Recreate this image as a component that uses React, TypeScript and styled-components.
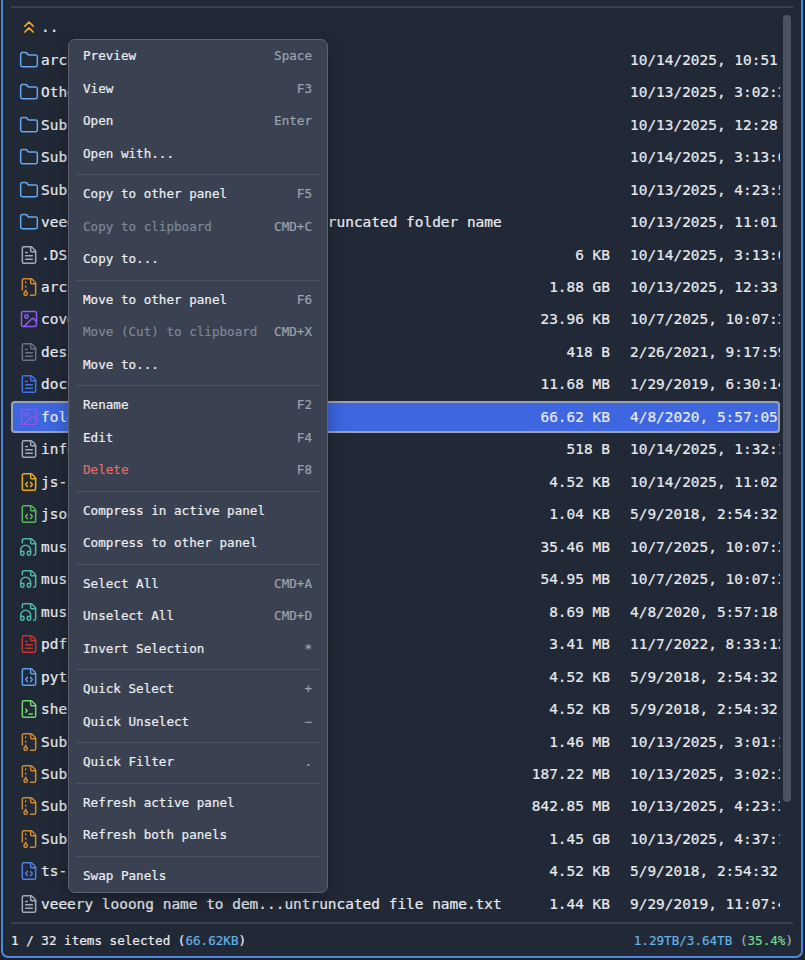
import React from 'react'
import styled, { createGlobalStyle } from 'styled-components'
import {
  ChevronsUp,
  FileArchive,
  FileCode,
  FileHeadphone,
  FileTerminal,
  FileText,
  Folder,
  Image,
  LucideIcon,
} from 'lucide-react'

const GlobalStyle = createGlobalStyle`
  html, body {
    margin: 0;
    height: 960px;
    overflow: hidden;
    background: #1c222e;
  }
  * {
    box-sizing: border-box;
  }
`
const Panel = styled.div`
  position: relative;
  height: 958px;
  margin: 0 2px 2px 1px;
  padding: 6px 8px 0;
  display: flex;
  flex-direction: column;
  background: #222936;
  border: 2px solid #4f85dc;
  border-top: none;
  border-radius: 0 0 7px 7px;
  font-family: "DejaVu Sans Mono", "Liberation Mono", monospace;
  color: #e8ebf0;
  -webkit-text-stroke: 0.2px;
`
const TopLine = styled.div`
  height: 2px;
  background: #394150;
`
const ListArea = styled.div`
  flex: 1;
  display: flex;
  padding-top: 3px;
  min-height: 0;
`
const Rows = styled.div`
  width: 769px;
`
const Row = styled.div<{ $selected?: boolean }>`
  height: 32.48px;
  display: flex;
  align-items: center;
  padding: 0 0 0 8px;
  font-size: 14.45px;
  white-space: nowrap;
  border-radius: 4px;
  background: ${p => (p.$selected ? '#3d66e0' : 'transparent')};
  box-shadow: ${p => (p.$selected ? 'inset 0 0 0 2px #98a3b5' : 'none')};
`
const IconSlot = styled.span<{ $tone: string }>`
  width: 20px;
  height: 20px;
  margin-right: 2px;
  flex: none;
  display: flex;
  color: ${p => p.$tone};
`
const Name = styled.span`
  flex: 1;
  overflow: hidden;
`
const Size = styled.span`
  width: 100px;
  text-align: right;
`
const Modified = styled.span`
  width: 150px;
  margin-left: 20px;
  overflow: hidden;
`
const ScrollThumb = styled.div`
  width: 8px;
  height: 787px;
  margin: 4px 0 0 3px;
  border-radius: 4px;
  background: #4b5361;
`
const StatusBar = styled.div`
  height: 34px;
  display: flex;
  align-items: center;
  justify-content: space-between;
  border-top: 2px solid #394150;
  font-size: 12.6px;
  white-space: nowrap;
`
const Blue = styled.span`
  color: #63b3ed;
`
const Green = styled.span`
  color: #74d98f;
`
const Muted = styled.span`
  color: #a0aec0;
`
const Menu = styled.div`
  position: absolute;
  left: 65px;
  top: 39px;
  width: 260px;
  height: 854px;
  background: #3a4150;
  border: 1px solid #5b6371;
  border-radius: 7px;
  font-size: 12.6px;
  box-shadow: 0 6px 18px rgba(0, 0, 0, 0.3);
`
const MenuItem = styled.div<{ $tone?: 'disabled' | 'danger' }>`
  height: 32.5px;
  padding: 0 15px 1px 14px;
  display: flex;
  align-items: center;
  justify-content: space-between;
  white-space: nowrap;
  color: ${p =>
    p.$tone === 'disabled' ? '#7f8796' : p.$tone === 'danger' ? '#e06c6c' : '#eceef2'};
`
const Shortcut = styled.span`
  color: #9ca3af;
`
const MenuSeparator = styled.div`
  height: 1px;
  margin: 4px 7px 3px;
  background: #4b5362;
`

const FOLDER = '#63a9ee'
const TEXT = '#a4abb6'
const ARCHIVE = '#d08a2c'
const IMAGE = '#8f5cf6'
const MUSIC = '#4fb8a3'
const TS = '#4c80e6'

type Entry = {
  icon: LucideIcon
  tone: string
  name: string
  size?: string
  date: string
  selected?: boolean
}

const entries: Entry[] = [
  { icon: Folder, tone: FOLDER, name: 'archives', date: '10/14/2025, 10:51:22 AM' },
  { icon: Folder, tone: FOLDER, name: 'Other', date: '10/13/2025, 3:02:31 PM' },
  { icon: Folder, tone: FOLDER, name: 'Subfolder 1', date: '10/13/2025, 12:28:44 PM' },
  { icon: Folder, tone: FOLDER, name: 'Subfolder 2', date: '10/14/2025, 3:13:08 PM' },
  { icon: Folder, tone: FOLDER, name: 'Subfolder 3', date: '10/13/2025, 4:23:51 PM' },
  { icon: Folder, tone: FOLDER, name: 'veeery looong name to demon...untruncated folder name', date: '10/13/2025, 11:01:12 AM' },
  { icon: FileText, tone: TEXT, name: '.DS_Store', size: '6 KB', date: '10/14/2025, 3:13:08 PM' },
  { icon: FileArchive, tone: ARCHIVE, name: 'archive.zip', size: '1.88 GB', date: '10/13/2025, 12:33:40 PM' },
  { icon: Image, tone: IMAGE, name: 'cover.png', size: '23.96 KB', date: '10/7/2025, 10:07:31 AM' },
  { icon: FileText, tone: '#6b7280', name: 'desktop.ini', size: '418 B', date: '2/26/2021, 9:17:59 AM' },
  { icon: FileText, tone: '#3f73e6', name: 'document.docx', size: '11.68 MB', date: '1/29/2019, 6:30:14 PM' },
  { icon: Image, tone: '#9355e0', name: 'folder.jpg', size: '66.62 KB', date: '4/8/2020, 5:57:05 PM', selected: true },
  { icon: FileText, tone: TEXT, name: 'info.txt', size: '518 B', date: '10/14/2025, 1:32:11 PM' },
  { icon: FileCode, tone: '#eaaa1e', name: 'js-file.js', size: '4.52 KB', date: '10/14/2025, 11:02:18 AM' },
  { icon: FileCode, tone: '#5fb760', name: 'json-file.json', size: '1.04 KB', date: '5/9/2018, 2:54:32 PM' },
  { icon: FileHeadphone, tone: MUSIC, name: 'music1.mp3', size: '35.46 MB', date: '10/7/2025, 10:07:31 AM' },
  { icon: FileHeadphone, tone: MUSIC, name: 'music2.mp3', size: '54.95 MB', date: '10/7/2025, 10:07:31 AM' },
  { icon: FileHeadphone, tone: MUSIC, name: 'music3.flac', size: '8.69 MB', date: '4/8/2020, 5:57:18 PM' },
  { icon: FileText, tone: '#c5352d', name: 'pdf-file.pdf', size: '3.41 MB', date: '11/7/2022, 8:33:12 AM' },
  { icon: FileCode, tone: '#5f9eef', name: 'python-file.py', size: '4.52 KB', date: '5/9/2018, 2:54:32 PM' },
  { icon: FileTerminal, tone: '#6fd66f', name: 'shell-file.sh', size: '4.52 KB', date: '5/9/2018, 2:54:32 PM' },
  { icon: FileArchive, tone: ARCHIVE, name: 'Subfolder 1.zip', size: '1.46 MB', date: '10/13/2025, 3:01:17 PM' },
  { icon: FileArchive, tone: ARCHIVE, name: 'Subfolder 2.zip', size: '187.22 MB', date: '10/13/2025, 3:02:31 PM' },
  { icon: FileArchive, tone: ARCHIVE, name: 'Subfolder 3.zip', size: '842.85 MB', date: '10/13/2025, 4:23:31 PM' },
  { icon: FileArchive, tone: ARCHIVE, name: 'Subfolder 4.zip', size: '1.45 GB', date: '10/13/2025, 4:37:12 PM' },
  { icon: FileCode, tone: TS, name: 'ts-file.ts', size: '4.52 KB', date: '5/9/2018, 2:54:32 PM' },
  { icon: FileText, tone: TEXT, name: 'veeery looong name to dem...untruncated file name.txt', size: '1.44 KB', date: '9/29/2019, 11:07:43 AM' },
]

type Action = { label: string; key?: string; tone?: 'disabled' | 'danger' }

const menuGroups: Action[][] = [
  [
    { label: 'Preview', key: 'Space' },
    { label: 'View', key: 'F3' },
    { label: 'Open', key: 'Enter' },
    { label: 'Open with...' },
  ],
  [
    { label: 'Copy to other panel', key: 'F5' },
    { label: 'Copy to clipboard', key: 'CMD+C', tone: 'disabled' },
    { label: 'Copy to...' },
  ],
  [
    { label: 'Move to other panel', key: 'F6' },
    { label: 'Move (Cut) to clipboard', key: 'CMD+X', tone: 'disabled' },
    { label: 'Move to...' },
  ],
  [
    { label: 'Rename', key: 'F2' },
    { label: 'Edit', key: 'F4' },
    { label: 'Delete', key: 'F8', tone: 'danger' },
  ],
  [{ label: 'Compress in active panel' }, { label: 'Compress to other panel' }],
  [
    { label: 'Select All', key: 'CMD+A' },
    { label: 'Unselect All', key: 'CMD+D' },
    { label: 'Invert Selection', key: '*' },
  ],
  [
    { label: 'Quick Select', key: '+' },
    { label: 'Quick Unselect', key: '\u2212' },
  ],
  [{ label: 'Quick Filter', key: '.' }],
  [{ label: 'Refresh active panel' }, { label: 'Refresh both panels' }],
  [{ label: 'Swap Panels' }],
]

export default function App() {
  return (
    <>
      <GlobalStyle />
      <Panel>
        <TopLine />
        <ListArea>
          <Rows>
            <Row>
              <IconSlot $tone="#f5a623">
                <ChevronsUp size={20} strokeWidth={2} />
              </IconSlot>
              <Name>..</Name>
            </Row>
            {entries.map((e, i) => (
              <Row key={i} $selected={e.selected}>
                <IconSlot $tone={e.tone}>
                  <e.icon size={20} strokeWidth={1.8} />
                </IconSlot>
                <Name>{e.name}</Name>
                <Size>{e.size}</Size>
                <Modified>{e.date}</Modified>
              </Row>
            ))}
          </Rows>
          <ScrollThumb />
        </ListArea>
        <StatusBar>
          <span>
            1 / 32 items selected (<Blue>66.62KB</Blue>)
          </span>
          <span>
            <Blue>1.29TB/3.64TB</Blue> <Muted>(</Muted>
            <Green>35.4%</Green>
            <Muted>)</Muted>
          </span>
        </StatusBar>
        <Menu>
          {menuGroups.map((group, g) => (
            <React.Fragment key={g}>
              {g > 0 && <MenuSeparator />}
              {group.map(a => (
                <MenuItem key={a.label} $tone={a.tone}>
                  <span>{a.label}</span>
                  {a.key && <Shortcut>{a.key}</Shortcut>}
                </MenuItem>
              ))}
            </React.Fragment>
          ))}
        </Menu>
      </Panel>
    </>
  )
}
